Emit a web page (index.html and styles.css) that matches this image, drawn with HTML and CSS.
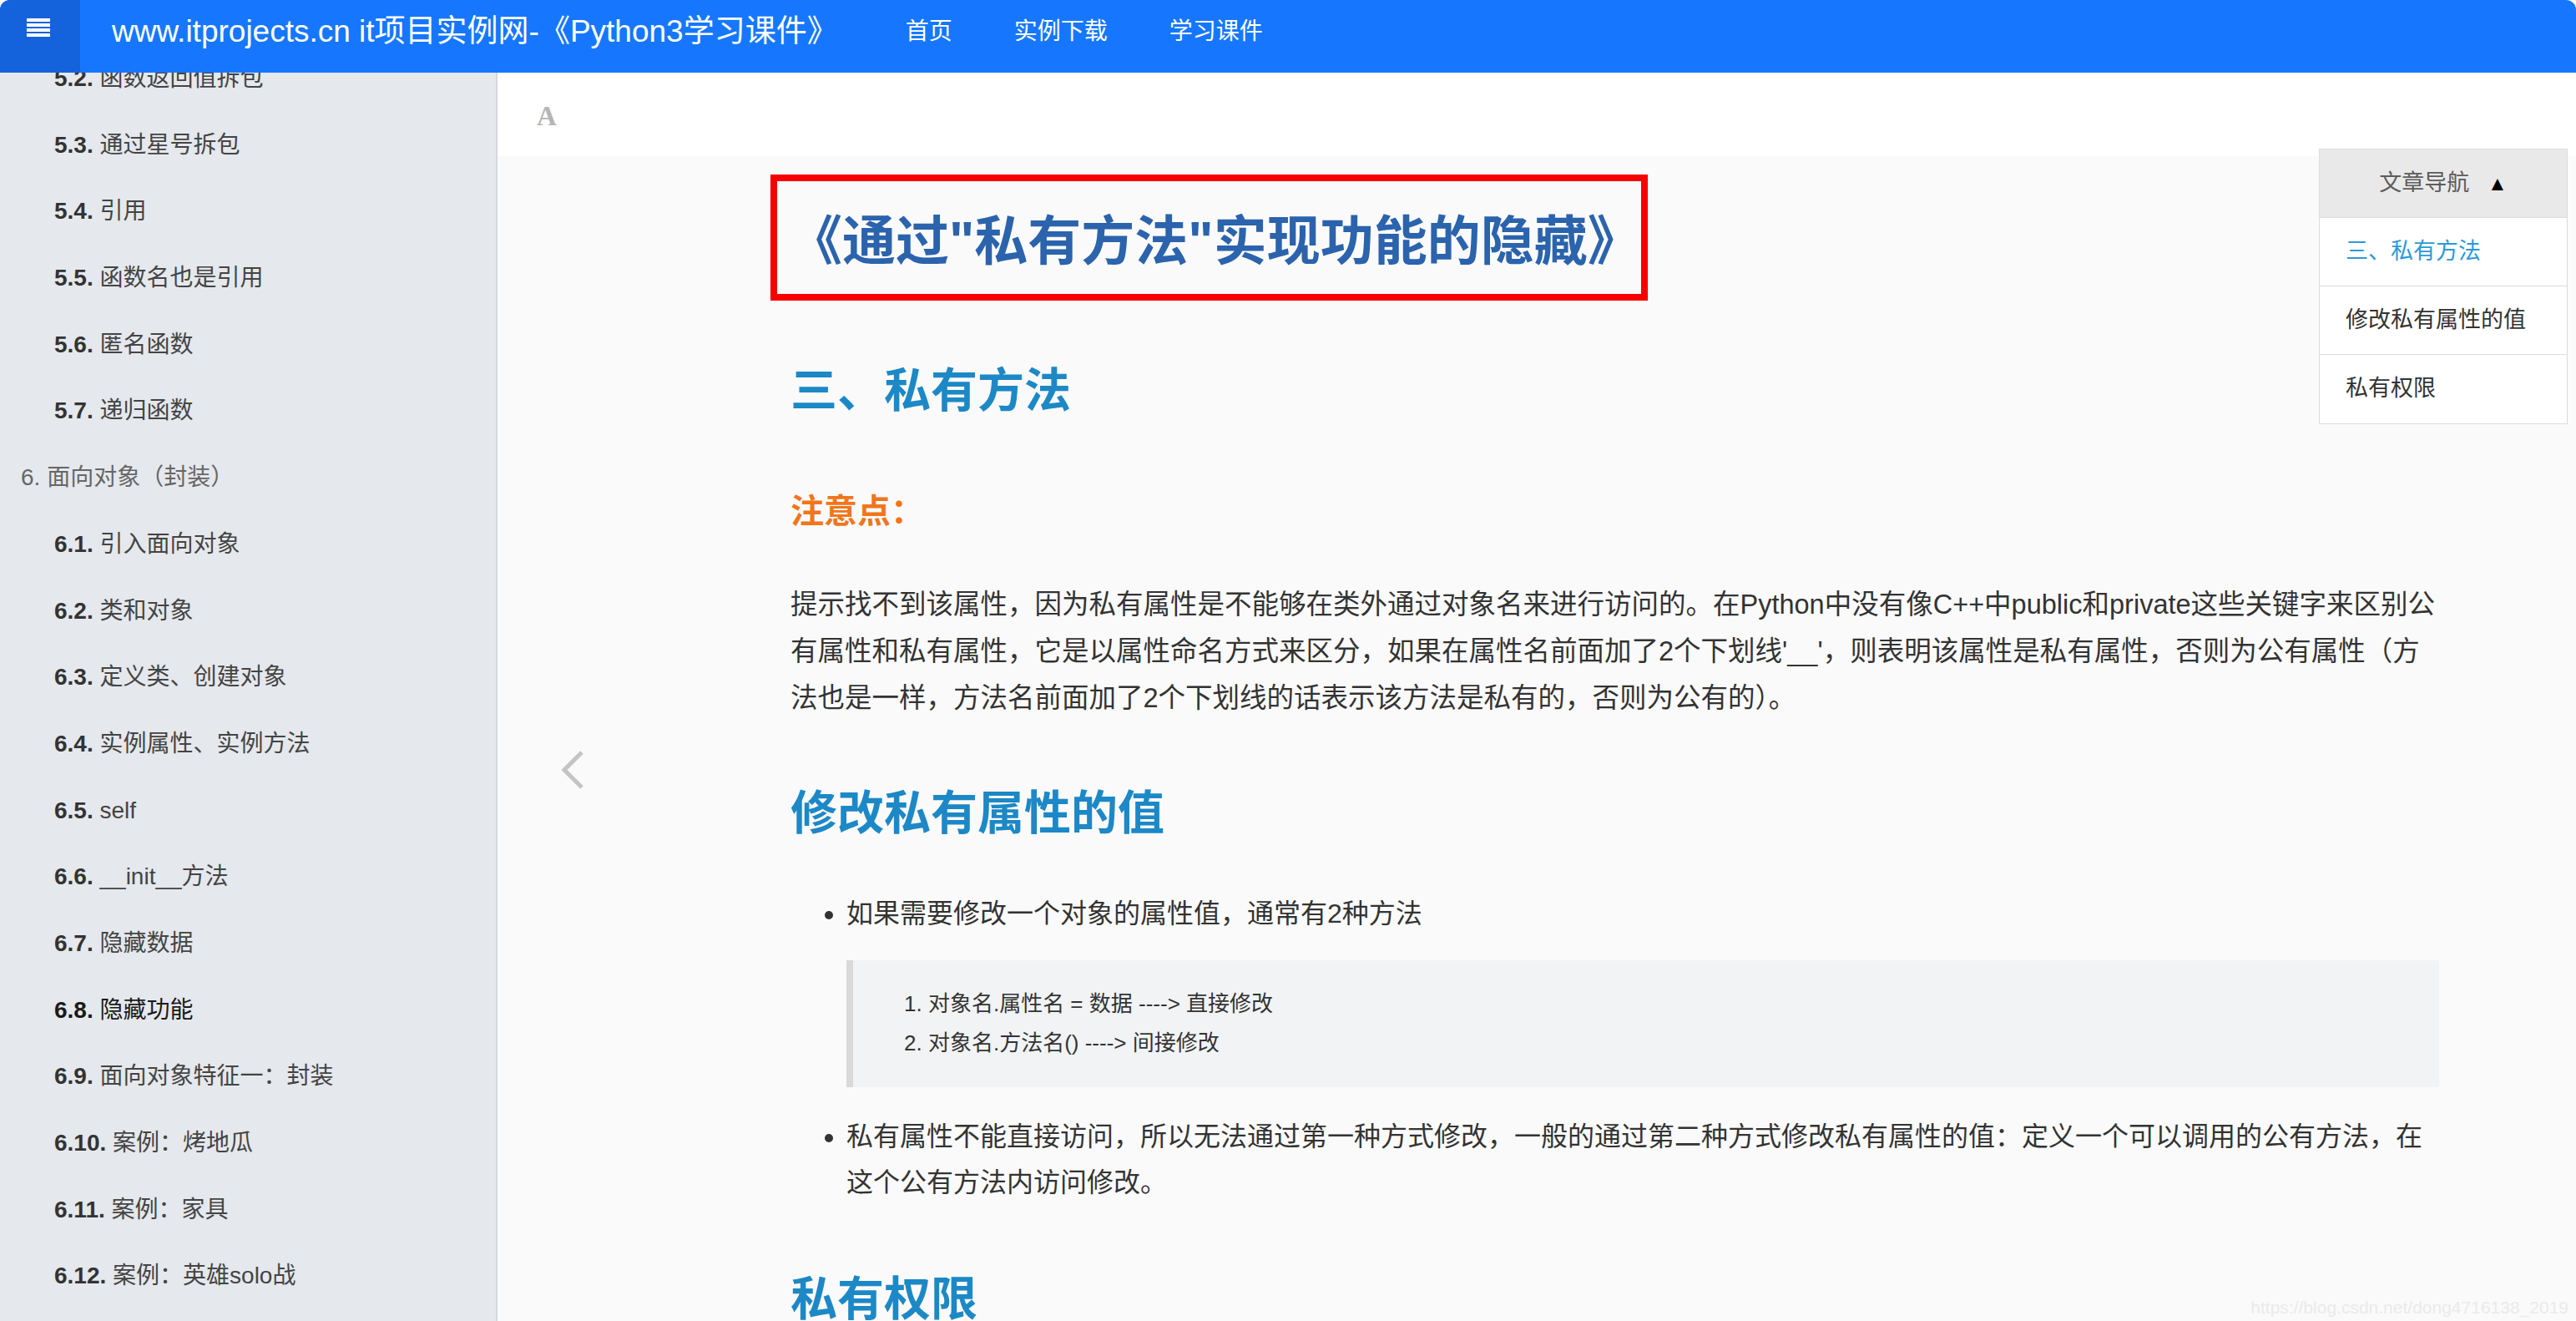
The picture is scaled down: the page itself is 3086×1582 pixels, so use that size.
FILE: index.html
```html
<!DOCTYPE html>
<html lang="zh-CN">
<head>
  <meta charset="UTF-8">
  <title>《通过"私有方法"实现功能的隐藏》</title>
  <link rel="stylesheet" href="styles.css">
</head>
<body>
  <header class="topbar">
    <div class="menu-btn">
      <span></span><span></span><span></span><span></span>
    </div>
    <div class="site-title">www.itprojects.cn it项目实例网-《Python3学习课件》</div>
    <nav class="topnav">
      <a href="#">首页</a>
      <a href="#">实例下载</a>
      <a href="#">学习课件</a>
    </nav>
  </header>

  <div class="layout">
    <aside class="sidebar">
      <ul class="summary">
        <li class="sub"><b>5.2.</b> 函数返回值拆包</li>
        <li class="sub"><b>5.3.</b> 通过星号拆包</li>
        <li class="sub"><b>5.4.</b> 引用</li>
        <li class="sub"><b>5.5.</b> 函数名也是引用</li>
        <li class="sub"><b>5.6.</b> 匿名函数</li>
        <li class="sub"><b>5.7.</b> 递归函数</li>
        <li class="chapter"><b>6.</b> 面向对象（封装）</li>
        <li class="sub"><b>6.1.</b> 引入面向对象</li>
        <li class="sub"><b>6.2.</b> 类和对象</li>
        <li class="sub"><b>6.3.</b> 定义类、创建对象</li>
        <li class="sub"><b>6.4.</b> 实例属性、实例方法</li>
        <li class="sub"><b>6.5.</b> self</li>
        <li class="sub"><b>6.6.</b> __init__方法</li>
        <li class="sub"><b>6.7.</b> 隐藏数据</li>
        <li class="sub active"><b>6.8.</b> 隐藏功能</li>
        <li class="sub"><b>6.9.</b> 面向对象特征一：封装</li>
        <li class="sub"><b>6.10.</b> 案例：烤地瓜</li>
        <li class="sub"><b>6.11.</b> 案例：家具</li>
        <li class="sub"><b>6.12.</b> 案例：英雄solo战</li>
      </ul>
    </aside>

    <main class="main">
      <div class="toolbar"><span class="font-btn">A</span></div>

      <a class="prev-page" href="#">
        <svg width="30" height="48" viewBox="0 0 30 48"><path d="M26 3 L5 24 L26 45" fill="none" stroke="#c4c4c4" stroke-width="5"/></svg>
      </a>

      <div class="toc">
        <div class="toc-head">文章导航 <span class="toc-arrow">▲</span></div>
        <a class="toc-item current" href="#">三、私有方法</a>
        <a class="toc-item" href="#">修改私有属性的值</a>
        <a class="toc-item" href="#">私有权限</a>
      </div>

      <article class="page">
        <h1 class="page-title">《通过"私有方法"实现功能的隐藏》</h1>

        <h2 class="first">三、私有方法</h2>
        <h4>注意点：</h4>
        <p>提示找不到该属性，因为私有属性是不能够在类外通过对象名来进行访问的。在Python中没有像C++中public和private这些关键字来区别公有属性和私有属性，它是以属性命名方式来区分，如果在属性名前面加了2个下划线'__'，则表明该属性是私有属性，否则为公有属性（方法也是一样，方法名前面加了2个下划线的话表示该方法是私有的，否则为公有的）。</p>

        <h2>修改私有属性的值</h2>
        <ul class="points">
          <li>如果需要修改一个对象的属性值，通常有2种方法
            <blockquote>
              <ol>
                <li>对象名.属性名 = 数据 ----&gt; 直接修改</li>
                <li>对象名.方法名() ----&gt; 间接修改</li>
              </ol>
            </blockquote>
          </li>
          <li>私有属性不能直接访问，所以无法通过第一种方式修改，一般的通过第二种方式修改私有属性的值：定义一个可以调用的公有方法，在这个公有方法内访问修改。</li>
        </ul>

        <h2 class="last">私有权限</h2>
      </article>

      <div class="watermark">https://blog.csdn.net/dong4716138_2019</div>
    </main>
  </div>
</body>
</html>
```

FILE: styles.css
```css
* { box-sizing: border-box; }
html, body { margin: 0; height: 100%; }
body { font-family: "Liberation Sans", "Noto Sans CJK SC", sans-serif; color: #333; background: #fafafa; overflow: hidden; }

.topbar { display: flex; align-items: flex-start; height: 87px; background: #1677fe; color: #fff; border-top-left-radius: 12px; border-top-right-radius: 12px; }
.menu-btn { width: 96px; height: 87px; background: #1563dc; border-top-left-radius: 12px; display: flex; flex-direction: column; gap: 2.5px; padding: 22px 0 0 32px; }
.menu-btn span { display: block; width: 28px; height: 3.5px; background: #fff; }
.site-title { margin-left: 38px; font-size: 37px; line-height: 76px; white-space: nowrap; }
.topnav { display: flex; margin-left: 44px; }
.topnav a { color: #fff; text-decoration: none; font-size: 28px; line-height: 76px; padding: 0 37px; }

.layout { display: flex; height: calc(100% - 87px); }
.sidebar { width: 596px; flex: none; background: #e5e8ec; border-right: 2px solid #d4d8dd; overflow: hidden; }
.summary { list-style: none; margin: -33px 0 0; padding: 0; }
.summary li { height: 79.7px; line-height: 79.7px; font-size: 28px; color: #444; white-space: nowrap; }
.summary li b { color: #333; }
.summary li.sub { padding-left: 65px; }
.summary li.chapter { padding-left: 25px; color: #666; }
.summary li.chapter b { color: #666; font-weight: normal; }
.summary li.active, .summary li.active b { color: #1a1a1a; }

.main { flex: 1; position: relative; min-width: 0; }
.toolbar { height: 100px; background: #fff; padding: 34px 0 0 47px; }
.font-btn { font-family: "Liberation Serif", serif; font-weight: bold; font-size: 33px; color: #b5b5b5; }

.prev-page { position: absolute; left: 75px; top: 811px; }

.toc { position: absolute; top: 91px; right: 10px; width: 298px; background: #fff; border: 1px solid #dcdcdc; font-size: 27px; }
.toc-head { height: 82px; line-height: 80px; text-align: center; background: #e9e9e9; color: #5c5c5c; border-bottom: 1px solid #dcdcdc; }
.toc-arrow { color: #000; font-size: 24px; margin-left: 14px; }
.toc-item { display: block; height: 82px; line-height: 80px; padding-left: 31px; color: #333; text-decoration: none; border-bottom: 1px solid #dcdcdc; }
.toc-item:last-child { border-bottom: none; }
.toc-item.current { color: #2a9ad8; }

.page { width: 1975px; margin-left: 351px; }
.page-title { display: inline-block; margin: 22px 0 0 -24px; padding: 10px 0 0 14px; border: 8px solid #f60000; font-size: 64px; line-height: 125px; color: #2b63ad; white-space: nowrap; }
h2 { margin: 70px 0 0; font-size: 56px; line-height: 80px; color: #1d88c6; }
h2.first { margin-top: 68px; }
h2.last { margin-top: 71px; }
h4 { margin: 74px 0 0; font-size: 40px; line-height: 60px; color: #f0761c; }
p { margin: 54px 0 0; font-size: 32.5px; line-height: 56px; color: #333; }
.points { margin: 53px 0 0; padding-left: 67px; font-size: 32px; line-height: 55.5px; }
.points > li + li { margin-top: 32px; }
blockquote { margin: 27px 0 0; padding: 29px 20px 29px 61px; background: #f1f3f5; border-left: 8px solid #d9d9d9; }
blockquote ol { margin: 0; padding: 0; list-style-position: inside; font-size: 26px; line-height: 47px; }

.watermark { position: absolute; right: 9px; bottom: 4px; font-size: 21px; color: #eaeaea; }
```
